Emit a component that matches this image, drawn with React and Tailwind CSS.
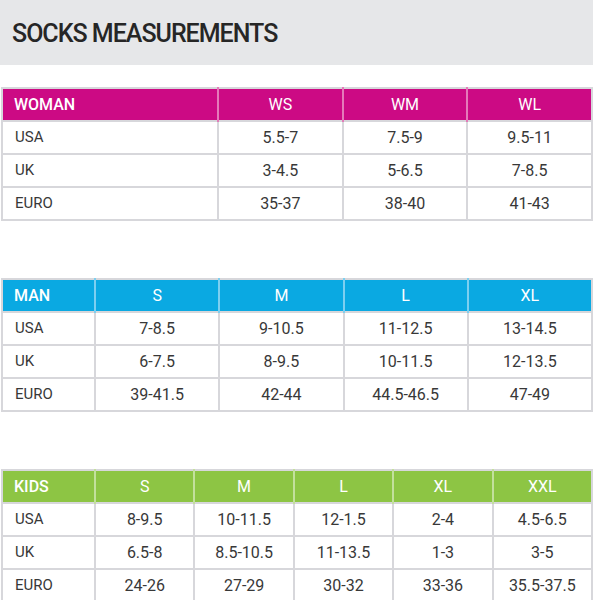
const TABLES = [
  {
    name: 'WOMAN',
    bg: 'bg-[#cc0a84]',
    line: 'border-[#e47ab9]',
    first: 'w-[216px]',
    sizes: ['WS', 'WM', 'WL'],
    rows: [
      ['USA', '5.5-7', '7.5-9', '9.5-11'],
      ['UK', '3-4.5', '5-6.5', '7-8.5'],
      ['EURO', '35-37', '38-40', '41-43'],
    ],
  },
  {
    name: 'MAN',
    bg: 'bg-[#0aa9e2]',
    line: 'border-[#7dcff0]',
    first: 'w-[93px]',
    sizes: ['S', 'M', 'L', 'XL'],
    rows: [
      ['USA', '7-8.5', '9-10.5', '11-12.5', '13-14.5'],
      ['UK', '6-7.5', '8-9.5', '10-11.5', '12-13.5'],
      ['EURO', '39-41.5', '42-44', '44.5-46.5', '47-49'],
    ],
  },
  {
    name: 'KIDS',
    bg: 'bg-[#8dc544]',
    line: 'border-[#c3e09c]',
    first: 'w-[93px]',
    sizes: ['S', 'M', 'L', 'XL', 'XXL'],
    rows: [
      ['USA', '8-9.5', '10-11.5', '12-1.5', '2-4', '4.5-6.5'],
      ['UK', '6.5-8', '8.5-10.5', '11-13.5', '1-3', '3-5'],
      ['EURO', '24-26', '27-29', '30-32', '33-36', '35.5-37.5'],
    ],
  },
];

const SizeTable = ({ t }) => (
  <table className="w-[592px] ml-[1px] table-fixed border-collapse border-2 border-[#d7d7db]">
    <thead>
      <tr className={`${t.bg} h-[33px]`}>
        <th className={`${t.first} text-left pl-[11px] text-white text-[16px] font-medium`}>
          {t.name}
        </th>
        {t.sizes.map((s) => (
          <th key={s} className={`border-l-2 ${t.line} text-center text-white text-[16px] font-normal`}>
            {s}
          </th>
        ))}
      </tr>
    </thead>
    <tbody>
      {t.rows.map((r) => (
        <tr key={r[0]} className="h-[33px] bg-white">
          {r.map((c, i) => (
            <td
              key={i}
              className={`border-2 border-[#d7d7db] text-[#383838] ${i === 0 ? 'text-left pl-[12px] text-[15px]' : 'text-center text-[16px]'}`}
            >
              {c}
            </td>
          ))}
        </tr>
      ))}
    </tbody>
  </table>
);

export default function App() {
  return (
    <div className="w-[593px] h-[600px] bg-white overflow-hidden font-['Roboto',sans-serif]">
      <div className="h-[65px] bg-[#e6e7e9] flex items-center pl-[12px]">
        <h1 className="text-[25px] font-medium tracking-[-0.04em] text-[#262626] pt-[2px]">SOCKS MEASUREMENTS</h1>
      </div>
      <div className="flex flex-col gap-[57px] pt-[22px]">
        {TABLES.map((t) => (
          <SizeTable key={t.name} t={t} />
        ))}
      </div>
    </div>
  );
}
